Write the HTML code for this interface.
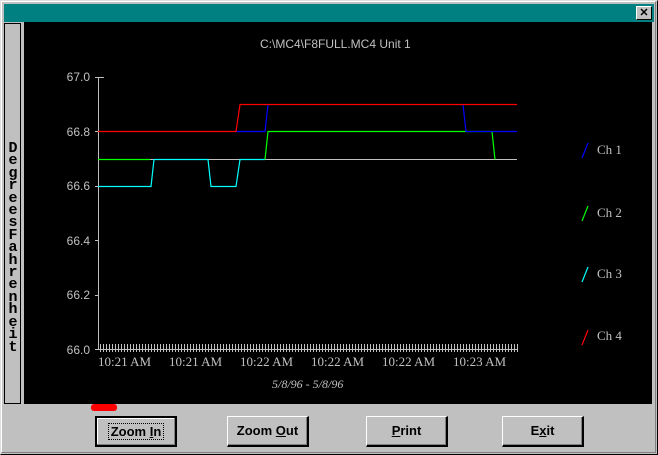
<!DOCTYPE html>
<html><head><style>
*{margin:0;padding:0}
body{width:658px;height:455px;background:#c0c0c0;position:relative;overflow:hidden;font-family:"Liberation Sans",sans-serif}
.btn{position:absolute;top:416px;width:82px;height:31px;background:#c0c0c0;box-sizing:border-box;border-top:1px solid #fff;border-left:1px solid #fff;border-right:2px solid #000;border-bottom:2px solid #000;box-shadow:inset -1px -1px 0 #808080;font:bold 13px "Liberation Sans",sans-serif;text-align:center;line-height:28px;color:#000}
</style></head><body>
<div style="position:absolute;left:0;top:0;border-top:1px solid #dfdfdf;border-left:1px solid #dfdfdf;border-right:1px solid #000;border-bottom:1px solid #000;box-sizing:border-box;width:658px;height:455px"></div>
<div style="position:absolute;left:1px;top:1px;width:655px;height:452px;border-top:1px solid #fff;border-left:1px solid #fff;border-right:1px solid #808080;border-bottom:1px solid #808080;box-sizing:border-box"></div>
<div style="position:absolute;left:4px;top:4px;width:650px;height:18px;background:#008080"></div>
<div style="position:absolute;left:636px;top:6px;width:16px;height:14px;background:#c0c0c0;box-sizing:border-box;border-top:1px solid #fff;border-left:1px solid #fff;border-right:1px solid #000;border-bottom:1px solid #000;font:bold 11px 'Liberation Sans',sans-serif;text-align:center;line-height:12px;color:#000">✕</div>
<div style="position:absolute;left:4px;top:23px;width:17px;height:381px;border:1px solid #000;box-sizing:border-box;background:#c0c0c0"></div>
<div style="position:absolute;left:5px;top:143px;width:16px;font:bold 15px 'Liberation Mono',monospace;line-height:12.4px;text-align:center;color:#000">D<br>e<br>g<br>r<br>e<br>e<br>s<br>F<br>a<br>h<br>r<br>e<br>n<br>h<br>e<br>i<br>t</div>
<div style="position:absolute;left:24px;top:22px;width:628px;height:382px;background:#000"></div>
<svg style="position:absolute;left:0;top:0" width="658" height="455" font-family="Liberation Sans, sans-serif">
<g fill="#c0c0c0" font-size="12">
<text x="260" y="48">C:\MC4\F8FULL.MC4   Unit 1</text>
<g text-anchor="end" font-size="12"><text x="90" y="81">67.0</text><text x="90" y="136">66.8</text><text x="90" y="190">66.6</text><text x="90" y="245">66.4</text><text x="90" y="299">66.2</text><text x="90" y="354">66.0</text></g>
<g font-family="Liberation Serif, serif" font-size="13"><text x="98" y="366">10:21 AM</text><text x="169" y="366">10:21 AM</text><text x="240" y="366">10:22 AM</text><text x="311" y="366">10:22 AM</text><text x="382" y="366">10:22 AM</text><text x="453" y="366">10:23 AM</text>
<text x="272" y="388" font-style="italic" font-size="12">5/8/96 - 5/8/96</text>
<text x="597" y="154">Ch  1</text><text x="597" y="217">Ch  2</text><text x="597" y="278">Ch  3</text><text x="597" y="340">Ch  4</text></g>
</g>
<g stroke="#c0c0c0" stroke-width="1" fill="none">
<path d="M98.5 77V349.5H517"/>
<path d="M95 77.5H104M95 131.5H98M95 186.5H98M95 240.5H98M95 295.5H98M95 349.5H98"/>
<path d="M98.5 159.5H517"/>
</g>
<g stroke-width="1.2" fill="none">
<path stroke="#00ffff" d="M98 186.5H151L154 159.5H208L211 186.5H236L240 159.5H265"/>
<path stroke="#00ff00" d="M98 159.5H150M265 159.5L268 131.5H492L495 159.5"/>
<path stroke="#0000ff" d="M236 131.5H265L268 104.5M463 104.5L466 131.5H517"/>
<path stroke="#ff0000" d="M98 131.5H236L240 104.5H517"/>
<path stroke="#0000ff" d="M588 143L582 158"/>
<path stroke="#00ff00" d="M588 206L582 221"/>
<path stroke="#00ffff" d="M588 267L582 282"/>
<path stroke="#ff0000" d="M588 330L582 345"/>
</g>
<g stroke="#c0c0c0" stroke-width="1">
<path d="M100.5 344V352M103.5 344V352M106.5 344V352M109.5 344V352M112.5 344V352M115.5 344V352M118.5 344V352M121.5 344V352M124.5 344V352M127.5 344V352M130.5 344V352M133.5 344V352M136.5 344V352M139.5 344V352M142.5 344V352M145.5 344V352M148.5 344V352M151.5 344V352M154.5 344V352M157.5 344V352M160.5 344V352M163.5 344V352M166.5 344V352M169.5 344V352M172.5 344V352M175.5 344V352M178.5 344V352M181.5 344V352M184.5 344V352M187.5 344V352M190.5 344V352M193.5 344V352M196.5 344V352M199.5 344V352M202.5 344V352M205.5 344V352M208.5 344V352M211.5 344V352M214.5 344V352M217.5 344V352M220.5 344V352M223.5 344V352M226.5 344V352M229.5 344V352M232.5 344V352M235.5 344V352M238.5 344V352M241.5 344V352M244.5 344V352M247.5 344V352M250.5 344V352M253.5 344V352M256.5 344V352M259.5 344V352M262.5 344V352M265.5 344V352M268.5 344V352M271.5 344V352M274.5 344V352M277.5 344V352M280.5 344V352M283.5 344V352M286.5 344V352M289.5 344V352M292.5 344V352M295.5 344V352M298.5 344V352M301.5 344V352M304.5 344V352M307.5 344V352M310.5 344V352M313.5 344V352M316.5 344V352M319.5 344V352M322.5 344V352M325.5 344V352M328.5 344V352M331.5 344V352M334.5 344V352M337.5 344V352M340.5 344V352M343.5 344V352M346.5 344V352M349.5 344V352M352.5 344V352M355.5 344V352M358.5 344V352M361.5 344V352M364.5 344V352M367.5 344V352M370.5 344V352M373.5 344V352M376.5 344V352M379.5 344V352M382.5 344V352M385.5 344V352M388.5 344V352M391.5 344V352M394.5 344V352M397.5 344V352M400.5 344V352M403.5 344V352M406.5 344V352M409.5 344V352M412.5 344V352M415.5 344V352M418.5 344V352M421.5 344V352M424.5 344V352M427.5 344V352M430.5 344V352M433.5 344V352M436.5 344V352M439.5 344V352M442.5 344V352M445.5 344V352M448.5 344V352M451.5 344V352M454.5 344V352M457.5 344V352M460.5 344V352M463.5 344V352M466.5 344V352M469.5 344V352M472.5 344V352M475.5 344V352M478.5 344V352M481.5 344V352M484.5 344V352M487.5 344V352M490.5 344V352M493.5 344V352M496.5 344V352M499.5 344V352M502.5 344V352M505.5 344V352M508.5 344V352M511.5 344V352M514.5 344V352M517.5 344V352"/>
</g>
<rect x="91" y="404" width="26" height="7" rx="3" fill="#ff0000"/>
</svg>
<div class="btn" style="left:95px;border:2px solid #000;box-shadow:inset -1px -1px 0 #808080,inset 1px 1px 0 #fff"><span style="border:1px dotted #000;padding:0 2px">Zoom <u>I</u>n</span></div>
<div class="btn" style="left:227px">Zoom <u>O</u>ut</div>
<div class="btn" style="left:366px"><u>P</u>rint</div>
<div class="btn" style="left:502px">E<u>x</u>it</div>
</body></html>
